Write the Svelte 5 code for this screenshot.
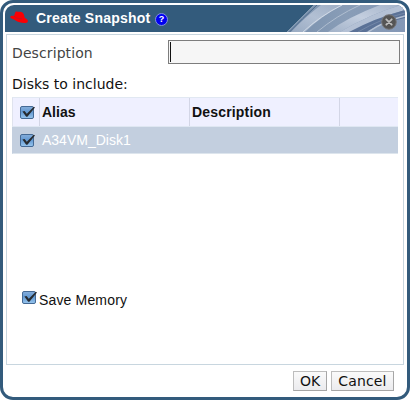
<script>
  let all = $state(true);
  let disk = $state(true);
  let memory = $state(true);
</script>

{#snippet tick(checked)}
  <svg class="tick" width="16" height="15" viewBox="0 0 16 15">
    <defs>
      <linearGradient id="box" x1="0" y1="0" x2="0" y2="1">
        <stop offset="0" stop-color="#86aedb" />
        <stop offset="0.45" stop-color="#6399d2" />
        <stop offset="1" stop-color="#98c6ee" />
      </linearGradient>
    </defs>
    <rect x="0.5" y="1.5" width="13" height="12" rx="1.5" fill="url(#box)" stroke="#456a95" />
    {#if checked}
      <path d="M2.4 6.5L4.6 6L6.8 8.8L13.8 1.8L15 2.4L7.4 11.8L6.2 11.8Z" fill="#272b30" />
    {/if}
  </svg>
{/snippet}

<div class="dialog">
  <header>
    <svg class="swoosh" width="122" height="27" viewBox="0 0 122 27">
      <defs>
        <linearGradient id="sky" x1="0" y1="0" x2="1" y2="0">
          <stop offset="0" stop-color="#7890ad" />
          <stop offset="0.5" stop-color="#899db7" />
          <stop offset="1" stop-color="#8498b6" />
        </linearGradient>
        <linearGradient id="beam" x1="0" y1="1" x2="1" y2="0">
          <stop offset="0" stop-color="#a3b3c9" />
          <stop offset="0.5" stop-color="#c3cedf" />
          <stop offset="1" stop-color="#a5b4ca" />
        </linearGradient>
      </defs>
      <path d="M4 27Q17 14 31 0H122V27Z" fill="url(#sky)" />
      <path d="M4 27Q17 14 31 0" fill="none" stroke="#8fa4ba" stroke-width=".8" />
      <path d="M6.5 27Q19 14 34 0" fill="none" stroke="#4b6a8b" stroke-width="1" />
      <path d="M8 27Q22 12 38 0H60Q38 11 22 27Z" fill="url(#beam)" opacity=".75" />
      <path d="M20 27Q37 11 59 0" fill="none" stroke="#d1dae6" stroke-width="1" />
      <path d="M34 27Q53 11 77 0" fill="none" stroke="#b0bed0" stroke-width="1" />
      <path d="M45 27Q65 12 97 0H118Q87 9 57 27Z" fill="url(#beam)" />
      <path d="M57 27Q87 9 118 0H122V5Q96 12 70 27Z" fill="#b4c1d5" />
      <path d="M66 27Q92 13 122 5V13Q98 18 83 27Z" fill="#5b7297" />
      <path d="M85 27Q101 16 122 11" fill="none" stroke="#b4c1d4" stroke-width="1.5" />
      <path d="M75 27Q97 14 122 8" fill="none" stroke="#7488a8" stroke-width="1" />
    </svg>
    <svg class="hat" width="20" height="14" viewBox="0 0 20 14">
      <path d="M5.4 1C6.4 -.1 8 .9 9.6 .7C11.5 .4 13.2 1.4 13.9 3.6L14.8 6.9C16.6 7.6 18.2 8.9 17.9 10.4C17.3 12.5 13 12.4 9.6 11.3C7.2 10.5 5.5 9.6 4 8.4C2.4 8.2 .6 7.4 .2 6.1C.3 5.1 2.2 4.6 4 4.9Z" fill="#fa0004" />
      <path d="M4 5.1C5.8 7.1 9 8.1 12 7.5" fill="none" stroke="#a52030" stroke-width=".6" />
    </svg>
    <h1>Create Snapshot</h1>
    <span class="help">?</span>
    <button class="close" aria-label="Close">
      <svg width="16" height="16" viewBox="0 0 16 16">
        <circle cx="8" cy="8" r="7.3" fill="#555" stroke="#77777a" />
        <path d="M5.3 5.3L10.7 10.7M10.7 5.3L5.3 10.7" stroke="#bdbdbd" stroke-width="1.8" stroke-linecap="round" />
      </svg>
    </button>
  </header>

  <main>
    <div class="field">
      <label for="description">Description</label>
      <div class="input" id="description"><i></i></div>
    </div>
    <div class="caption">Disks to include:</div>
    <div class="table">
      <div class="row head">
        <button class="cell check" aria-label="All disks" onclick={() => (all = !all)}>{@render tick(all)}</button>
        <div class="cell alias">Alias</div>
        <div class="cell desc">Description</div>
        <div class="cell"></div>
      </div>
      <div class="row selected">
        <button class="cell check" aria-label="Disk" onclick={() => (disk = !disk)}>{@render tick(disk)}</button>
        <div class="cell alias">A34VM_Disk1</div>
      </div>
    </div>
    <button class="memory" onclick={() => (memory = !memory)}>
      {@render tick(memory)}<span>Save Memory</span>
    </button>
  </main>

  <footer>
    <button class="ok">OK</button>
    <button class="cancel">Cancel</button>
  </footer>
</div>

<style>
  :global(body) {
    background: #fff;
  }
  * {
    box-sizing: border-box;
  }
  button {
    margin: 0;
    padding: 0;
    border: 0;
    background: none;
    font: inherit;
    color: inherit;
  }
  svg {
    display: block;
    flex: none;
  }
  .dialog {
    width: 410px;
    height: 400px;
    padding: 2px;
    display: flex;
    flex-direction: column;
    border: 3px solid #335b7c;
    border-radius: 13px;
    background: #fff;
    font-family: "Liberation Sans", Arial, sans-serif;
    font-size: 14px;
    color: #111;
  }
  header {
    position: relative;
    flex: none;
    height: 27px;
    display: flex;
    align-items: center;
    padding-left: 5px;
    border-radius: 9px 9px 0 0;
    overflow: hidden;
    background: #335b7c;
  }
  .swoosh {
    position: absolute;
    right: 0;
    top: 0;
  }
  .hat {
    margin-bottom: 1px;
  }
  h1 {
    margin: 0 0 2px 6px;
    width: 115px;
    font-size: 14px;
    line-height: 16px;
    letter-spacing: 0.2px;
    color: #fff;
    white-space: nowrap;
  }
  .help {
    margin: 2px 0 0 4px;
    width: 13px;
    height: 13px;
    border: 1px solid #8390dc;
    border-radius: 50%;
    background: #0000f0;
    color: #fff;
    font-size: 9px;
    font-weight: bold;
    line-height: 11px;
    text-align: center;
  }
  .close {
    position: relative;
    margin: 6px 8px 0 auto;
  }
  main {
    flex: none;
    height: 331px;
    margin: 2px 1px 0;
    padding: 5px 3px 0 5px;
    display: flex;
    flex-direction: column;
    border: 1px solid #c8d6df;
  }
  .field {
    display: flex;
    height: 24px;
    align-items: center;
    justify-content: space-between;
    font-family: "DejaVu Sans", sans-serif;
    color: #444;
  }
  .field label {
    padding-top: 2px;
    letter-spacing: 0.1px;
  }
  .input {
    width: 232px;
    height: 24px;
    padding: 1px;
    border: 1px solid #7d7d7d;
    background: #f6f6f6;
  }
  .input i {
    display: block;
    width: 1px;
    height: 20px;
    background: #111;
  }
  .caption {
    margin-top: 12px;
    height: 16px;
    line-height: 16px;
    font-family: "DejaVu Sans", sans-serif;
  }
  .table {
    margin-top: 5px;
    width: 386px;
  }
  .row {
    display: flex;
    align-items: stretch;
  }
  .head {
    height: 30px;
    border-top: 1px solid #e1e8f2;
    border-bottom: 1px solid #dfe7f2;
    border-left: 1px solid #dfe3ee;
    background: #eff0ff;
    font-weight: bold;
  }
  .selected {
    height: 27px;
    border-left: 1px solid #c3cfdf;
    border-bottom: 1px solid #dde5ed;
    background: #c3cfdf;
    color: #fff;
  }
  .cell {
    display: flex;
    align-items: center;
    padding-left: 2px;
  }
  .check {
    width: 27px;
    padding-left: 7px;
    border-right: 1px solid #d3d6e6;
  }
  .selected .check {
    border-color: transparent;
  }
  .alias {
    width: 150px;
  }
  .head .alias,
  .head .desc {
    border-right: 1px solid #d3d6e6;
  }
  .desc {
    width: 150px;
    letter-spacing: 0.17px;
  }
  .memory {
    margin: 136px 0 0 10px;
    height: 18px;
    display: flex;
    align-items: flex-start;
  }
  .memory span {
    margin: 2px 0 0 1px;
    line-height: 16px;
    letter-spacing: 0.16px;
  }
  footer {
    display: flex;
    justify-content: flex-end;
    gap: 4px;
    padding: 6px 11px 0 0;
    font-family: "DejaVu Sans", sans-serif;
  }
  footer button {
    height: 20px;
    border: 1px solid #bdbdbd;
    border-right-color: #a6a6a6;
    border-bottom-color: #a6a6a6;
    background: linear-gradient(#fafafa, #ebebee);
    line-height: 18px;
    text-align: center;
  }
  .ok {
    width: 34px;
  }
  .cancel {
    width: 63px;
    letter-spacing: 0.15px;
  }
</style>
